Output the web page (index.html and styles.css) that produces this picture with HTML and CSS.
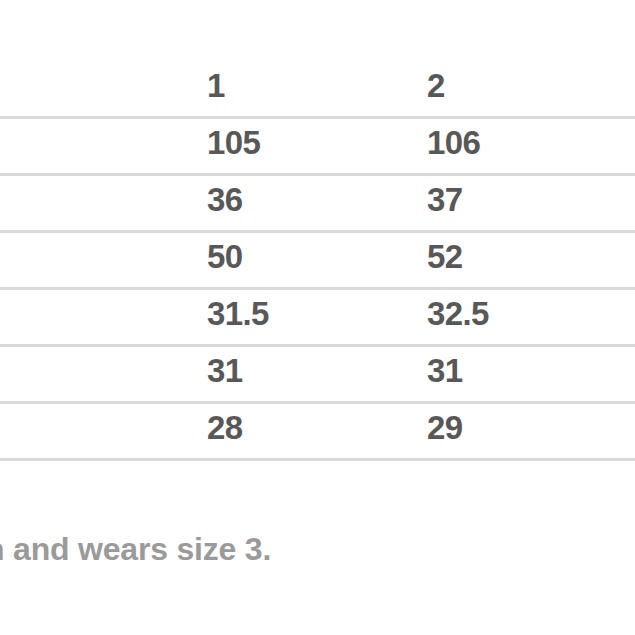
FILE: index.html
```html
<!DOCTYPE html>
<html>
<head>
<meta charset="utf-8">
<link rel="stylesheet" href="styles.css">
</head>
<body>
<div class="page">
  <table class="sizes">
    <thead>
      <tr><th class="label"></th><th>1</th><th>2</th></tr>
    </thead>
    <tbody>
      <tr><td class="label"></td><td>105</td><td>106</td></tr>
      <tr><td class="label"></td><td>36</td><td>37</td></tr>
      <tr><td class="label"></td><td>50</td><td>52</td></tr>
      <tr><td class="label"></td><td>31.5</td><td>32.5</td></tr>
      <tr><td class="label"></td><td>31</td><td>31</td></tr>
      <tr><td class="label"></td><td>28</td><td>29</td></tr>
    </tbody>
  </table>
  <p class="note">n and wears size 3.</p>
</div>
</body>
</html>
```
FILE: styles.css
```css
html, body {
  margin: 0;
  padding: 0;
  background: #ffffff;
}
.page {
  width: 635px;
  height: 635px;
  overflow: hidden;
  padding-top: 62px;
  box-sizing: border-box;
  font-family: "Liberation Sans", Arial, sans-serif;
  font-weight: 700;
}
.sizes {
  width: 100%;
  border-collapse: collapse;
  table-layout: fixed;
}
.sizes th, .sizes td {
  padding: 0 0 6px 0;
  line-height: 48px;
  font-size: 33px;
  font-weight: 700;
  color: #585858;
  text-align: left;
  border-bottom: 3px solid #d9d9d9;
  letter-spacing: -0.6px;
  vertical-align: top;
}
.sizes .label {
  width: 207px;
}
.sizes th:nth-child(2), .sizes td:nth-child(2) {
  width: 220px;
}
.note {
  margin: 68px 0 0 -15px;
  font-size: 32px;
  line-height: 40px;
  color: #9a9a9a;
  letter-spacing: -0.2px;
  white-space: nowrap;
}
```
